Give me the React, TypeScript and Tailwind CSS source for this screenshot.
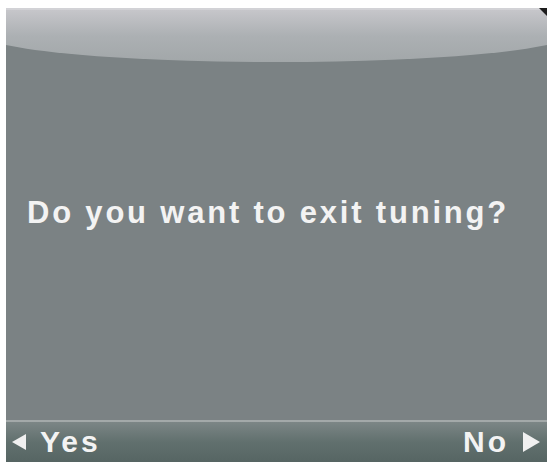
export default function App() {
  return (
    <div className="w-[550px] h-[462px] bg-white overflow-hidden" style={{ fontFamily: '"Liberation Sans", Arial, sans-serif' }}>
      <div className="relative ml-[6px] mt-[8px] w-[541px] h-[454px] bg-[#7b8284] flex flex-col overflow-hidden">
        {/* curved header */}
        <div className="-ml-[30px] w-[601px] h-[54px] shrink-0 bg-gradient-to-b from-[#c6c6ca] via-[#acb0b3] to-[#a2a7a9] rounded-bl-[300px_30px] rounded-br-[300px_30px] border-t-2 border-[#d2d2d6]" />

        {/* corner mark */}
        <svg className="absolute right-0 top-0" width="8" height="8" viewBox="0 0 8 8">
          <polygon points="0,0 8,0 8,8" fill="#1d1d1d" />
        </svg>

        <div className="flex-1 pl-[21px] pt-[134px]">
          <p className="text-[31px] leading-[34px] font-bold tracking-[2.8px] text-[#f3f3f3]">
            Do you want to exit tuning?
          </p>
        </div>

        {/* softkey bar */}
        <div className="h-[42px] shrink-0 border-t-2 border-[#a3a9a9] bg-gradient-to-b from-[#7c8686] via-[#61706e] to-[#566563] flex items-center justify-between pl-[4px] pr-[6px]">
          <div className="flex items-center gap-[12px] text-[#f3f3f3]">
            <svg width="18" height="18" viewBox="0 0 18 18">
              <polygon points="2,9 16,1 16,17" fill="#f0f0f0" />
            </svg>
            <span className="text-[30px] leading-[32px] font-bold tracking-[3px]">Yes</span>
          </div>
          <div className="flex items-center gap-[12px] text-[#f3f3f3]">
            <span className="text-[30px] leading-[32px] font-bold tracking-[3px]">No</span>
            <svg width="20" height="22" viewBox="0 0 20 22">
              <polygon points="2,1 19,11 2,21" fill="#f0f0f0" />
            </svg>
          </div>
        </div>
      </div>
    </div>
  )
}
